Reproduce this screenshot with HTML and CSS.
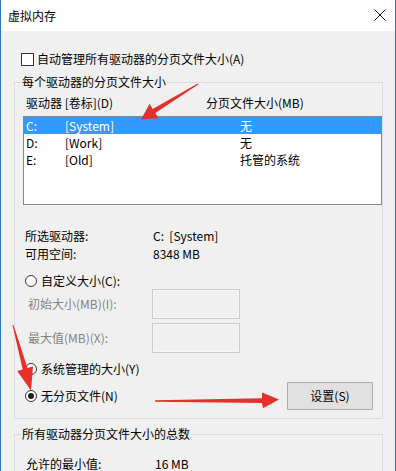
FILE: index.html
```html
<!DOCTYPE html>
<html lang="zh-CN">
  <head>
    <meta charset="UTF-8" />
    <meta name="viewport" content="width=device-width, initial-scale=1.0" />
    <title>虚拟内存</title>
    <link rel="stylesheet" href="styles.css">
  </head>
  <body>
    <div class="window">
      <div class="titlebar">
        <span class="title">虚拟内存</span>
        <svg class="close" width="12" height="12" viewBox="0 0 12 12">
          <path d="M0.5 0.5 L11.5 11.5 M11.5 0.5 L0.5 11.5" stroke="#111" stroke-width="1" fill="none" />
        </svg>
      </div>

      <div class="content">
        <div class="check-row">
          <span class="checkbox"></span>
          <span>自动管理所有驱动器的分页文件大小(A)</span>
        </div>

        <div class="group group-drives">
          <div class="group-title">每个驱动器的分页文件大小</div>
          <div class="list-head">
            <span class="head-drive">驱动器 [卷标](D)</span>
            <span>分页文件大小(MB)</span>
          </div>
          <div class="list">
            <div class="list-row selected">
              <span>C:</span><span>[System]</span><span>无</span>
            </div>
            <div class="list-row">
              <span>D:</span><span>[Work]</span><span>无</span>
            </div>
            <div class="list-row">
              <span>E:</span><span>[Old]</span><span>托管的系统</span>
            </div>
          </div>

          <div class="info-row first">
            <span class="info-label">所选驱动器:</span>
            <span>C:&nbsp;&nbsp;[System]</span>
          </div>
          <div class="info-row">
            <span class="info-label">可用空间:</span>
            <span>8348 MB</span>
          </div>

          <div class="radio-row custom">
            <span class="radio"></span>
            <span>自定义大小(C):</span>
          </div>
          <div class="field-row">
            <span class="field-label">初始大小(MB)(I):</span>
            <span class="field"></span>
          </div>
          <div class="field-row second">
            <span class="field-label">最大值(MB)(X):</span>
            <span class="field"></span>
          </div>

          <div class="radio-row system">
            <span class="radio"></span>
            <span>系统管理的大小(Y)</span>
          </div>
          <div class="radio-row none">
            <span class="radio checked"></span>
            <span>无分页文件(N)</span>
            <button class="set-btn" type="button">设置(S)</button>
          </div>
        </div>

        <div class="group group-total">
          <div class="group-title">所有驱动器分页文件大小的总数</div>
          <div class="info-row total">
            <span class="total-label">允许的最小值:</span>
            <span>16 MB</span>
          </div>
        </div>
      </div>

      <svg class="arrows" width="396" height="471" viewBox="0 0 396 471">
        <polygon fill="#e5312a" points="198.3,84.4 155.3,113.1 158.6,118.2 141,119.5 149.6,103.8 152.7,108.9 197.7,83.6" />
        <polygon fill="#e5312a" points="13.5,324.9 27.5,368.1 33,366.5 31,390.5 17.2,371 22.7,369.5 12.5,325.1" />
        <polygon fill="#e5312a" points="155,400.3 262,398.2 262,392.5 279,399.5 263,408.2 262,403 155,401.7" />
      </svg>
    </div>
  </body>
</html>
```

FILE: styles.css
```css
* {
  box-sizing: border-box;
  margin: 0;
  padding: 0;
}

body {
  font-family: "Noto Sans CJK SC", "Microsoft YaHei", sans-serif;
  font-size: 12px;
  color: #000;
  background: #f0f0f0;
}

.window {
  position: relative;
  width: 396px;
  height: 471px;
  overflow: hidden;
  border-left: 1px solid #2f76b5;
  border-right: 1px solid #2f76b5;
  background: #f0f0f0;
}

.titlebar {
  height: 31px;
  background: #fff;
  display: flex;
  align-items: center;
  justify-content: space-between;
  padding: 0 9px 0 7px;
}

.title {
  line-height: 18px;
}

.close {
  display: block;
  margin-top: -1px;
}

.content {
  padding: 0 12px 0 13px;
}

.check-row {
  display: flex;
  align-items: center;
  height: 18px;
  margin-top: 19px;
  padding-left: 7px;
  line-height: 18px;
}

.checkbox {
  width: 13px;
  height: 13px;
  border: 1px solid #333;
  background: #fff;
  margin-right: 3px;
}

.group {
  border: 1px solid #dcdcdc;
}

.group-drives {
  margin-top: 14px;
  height: 337px;
}

.group-total {
  margin-top: 15px;
  height: 60px;
  border-bottom: none;
}

.group-title {
  width: fit-content;
  margin: -10px 0 0 6px;
  padding: 0 1px;
  line-height: 18px;
  background: #f0f0f0;
}

.list-head {
  display: flex;
  margin-top: 3px;
  padding-left: 11px;
  line-height: 18px;
}

.head-drive {
  width: 180px;
}

.list {
  margin: 4px 0 0 8px;
  height: 89px;
  border: 1px solid #828790;
  background: #fff;
}

.list-row {
  display: grid;
  grid-template-columns: 39px 175px 1fr;
  height: 17px;
  line-height: 17px;
  padding-left: 2px;
}

.list-row.selected {
  background: #3399ff;
  color: #fff;
}

.info-row {
  display: flex;
  line-height: 18px;
  padding-left: 10px;
}

.info-row.first {
  margin-top: 22px;
}

.info-label {
  width: 128px;
}

.radio-row {
  display: flex;
  align-items: center;
  line-height: 18px;
  padding-left: 10px;
}

.radio {
  position: relative;
  width: 12px;
  height: 12px;
  border: 1px solid #333;
  border-radius: 50%;
  background: #fff;
  margin-right: 4px;
}

.radio.checked::after {
  content: "";
  position: absolute;
  left: 2px;
  top: 2px;
  width: 6px;
  height: 6px;
  border-radius: 50%;
  background: #1f1f1f;
}

.radio-row.custom {
  margin-top: 10px;
  height: 16px;
}

.field-row {
  display: flex;
  align-items: center;
  height: 30px;
  padding-left: 13px;
}

.field-row.second {
  margin-top: 4px;
}

.field-label {
  width: 124px;
  color: #838383;
  line-height: 18px;
}

.field {
  width: 88px;
  height: 30px;
  border: 1px solid #c9c9c9;
  background: #f0f0f0;
  box-shadow: inset 0 0 0 1px #f6f6f6;
}

.radio-row.system {
  margin-top: 7px;
  height: 18px;
}

.radio-row.none {
  margin-top: 4px;
  height: 28px;
  padding-right: 9px;
}

.set-btn {
  margin-left: auto;
  width: 86px;
  height: 28px;
  font: inherit;
  color: #000;
  background: #e1e1e1;
  border: 1px solid #adadad;
}

.info-row.total {
  margin-top: 12px;
  padding-left: 11px;
}

.total-label {
  width: 129px;
}

.arrows {
  position: absolute;
  left: -1px;
  top: 0;
  pointer-events: none;
}
```
